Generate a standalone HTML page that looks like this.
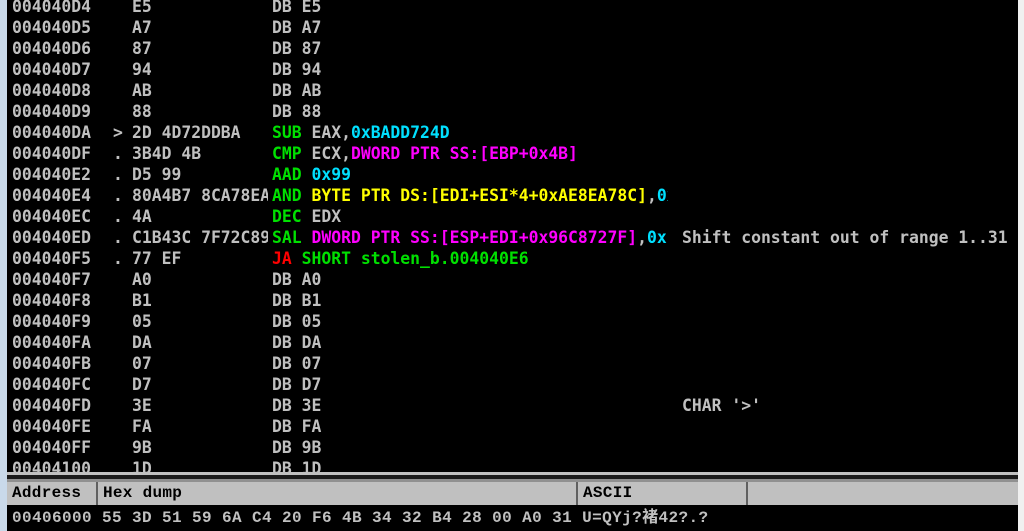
<!DOCTYPE html>
<html><head><style>
*{margin:0;padding:0;box-sizing:border-box}
body{width:1024px;height:531px;overflow:hidden;background:#000;position:relative;font-family:"DejaVu Sans Mono","Liberation Mono",monospace;font-weight:bold;font-size:16.4px;color:#c0c0c0}
#left{position:absolute;left:0;top:0;width:7px;height:531px;background:#c9d9ea}
#right{position:absolute;left:1018px;top:0;width:6px;height:531px;background:#f0f0f0}
.r{position:absolute;left:0;height:21px;line-height:21px;white-space:pre}
.r span{position:absolute;top:0;overflow:hidden;white-space:pre}
.a{left:12px}.m{left:113px}.h{left:132px;width:136px}.d{left:272px;width:396px}.c{left:682px}
.g{color:#00e000}.cy{color:#00e0ff}.mg{color:#ff00ff}.y{color:#ffff00}.rd{color:#ff0000}
#bar1{position:absolute;left:7px;top:472px;width:1011px;height:3px;background:#c0c0c0}
#bar2{position:absolute;left:7px;top:475px;width:1011px;height:4px;background:#1a1a1a}
#bar3{position:absolute;left:7px;top:479px;width:1011px;height:3px;background:#909090}
#hdr{position:absolute;left:7px;top:482px;width:1011px;height:23px;background:#c0c0c0;color:#000;font-family:"Liberation Mono",monospace;font-weight:bold;font-size:16px;line-height:23px;letter-spacing:0.3px}
#hdr span{position:absolute;top:0;height:23px;padding-left:5px;border-left:2px solid #606060}
#data{position:absolute;left:12px;top:506px;font-family:"Liberation Mono","Noto Sans CJK SC",monospace;font-weight:bold;font-size:16px;line-height:24px;color:#c0c0c0;white-space:pre;letter-spacing:0.4px}
</style></head><body>
<div id="left"></div><div id="right"></div>
<div class="r" style="top:-4px"><span class="a">004040D4</span><span class="h">E5</span><span class="d">DB E5</span></div>
<div class="r" style="top:17px"><span class="a">004040D5</span><span class="h">A7</span><span class="d">DB A7</span></div>
<div class="r" style="top:38px"><span class="a">004040D6</span><span class="h">87</span><span class="d">DB 87</span></div>
<div class="r" style="top:59px"><span class="a">004040D7</span><span class="h">94</span><span class="d">DB 94</span></div>
<div class="r" style="top:80px"><span class="a">004040D8</span><span class="h">AB</span><span class="d">DB AB</span></div>
<div class="r" style="top:101px"><span class="a">004040D9</span><span class="h">88</span><span class="d">DB 88</span></div>
<div class="r" style="top:122px"><span class="a">004040DA</span><span class="m">&gt;</span><span class="h">2D 4D72DDBA</span><span class="d"><b class="g">SUB</b> EAX,<b class="cy">0xBADD724D</b></span></div>
<div class="r" style="top:143px"><span class="a">004040DF</span><span class="m">.</span><span class="h">3B4D 4B</span><span class="d"><b class="g">CMP</b> ECX,<b class="mg">DWORD PTR SS:[EBP+0x4B]</b></span></div>
<div class="r" style="top:164px"><span class="a">004040E2</span><span class="m">.</span><span class="h">D5 99</span><span class="d"><b class="g">AAD</b> <b class="cy">0x99</b></span></div>
<div class="r" style="top:185px"><span class="a">004040E4</span><span class="m">.</span><span class="h">80A4B7 8CA78EAE</span><span class="d"><b class="g">AND</b> <b class="y">BYTE PTR DS:[EDI+ESI*4+0xAE8EA78C]</b>,<b class="cy">0x</b></span></div>
<div class="r" style="top:206px"><span class="a">004040EC</span><span class="m">.</span><span class="h">4A</span><span class="d"><b class="g">DEC</b> EDX</span></div>
<div class="r" style="top:227px"><span class="a">004040ED</span><span class="m">.</span><span class="h">C1B43C 7F72C896</span><span class="d"><b class="g">SAL</b> <b class="mg">DWORD PTR SS:[ESP+EDI+0x96C8727F]</b>,<b class="cy">0x</b></span><span class="c">Shift constant out of range 1..31</span></div>
<div class="r" style="top:248px"><span class="a">004040F5</span><span class="m">.</span><span class="h">77 EF</span><span class="d"><b class="rd">JA</b> <b class="g">SHORT stolen_b.004040E6</b></span></div>
<div class="r" style="top:269px"><span class="a">004040F7</span><span class="h">A0</span><span class="d">DB A0</span></div>
<div class="r" style="top:290px"><span class="a">004040F8</span><span class="h">B1</span><span class="d">DB B1</span></div>
<div class="r" style="top:311px"><span class="a">004040F9</span><span class="h">05</span><span class="d">DB 05</span></div>
<div class="r" style="top:332px"><span class="a">004040FA</span><span class="h">DA</span><span class="d">DB DA</span></div>
<div class="r" style="top:353px"><span class="a">004040FB</span><span class="h">07</span><span class="d">DB 07</span></div>
<div class="r" style="top:374px"><span class="a">004040FC</span><span class="h">D7</span><span class="d">DB D7</span></div>
<div class="r" style="top:395px"><span class="a">004040FD</span><span class="h">3E</span><span class="d">DB 3E</span><span class="c">CHAR '&gt;'</span></div>
<div class="r" style="top:416px"><span class="a">004040FE</span><span class="h">FA</span><span class="d">DB FA</span></div>
<div class="r" style="top:437px"><span class="a">004040FF</span><span class="h">9B</span><span class="d">DB 9B</span></div>
<div class="r" style="top:458px"><span class="a">00404100</span><span class="h">1D</span><span class="d">DB 1D</span></div>
<div id="bar1"></div><div id="bar2"></div><div id="bar3"></div>
<div id="hdr"><span style="left:0;border-left:none;padding-left:5px">Address</span><span style="left:89px;width:480px">Hex dump</span><span style="left:569px;width:170px">ASCII</span><span style="left:739px;width:272px"></span></div>
<div id="data">00406000 55 3D 51 59 6A C4 20 F6 4B 34 32 B4 28 00 A0 31 U=QYj?褚42?.?</div>
</body></html>
